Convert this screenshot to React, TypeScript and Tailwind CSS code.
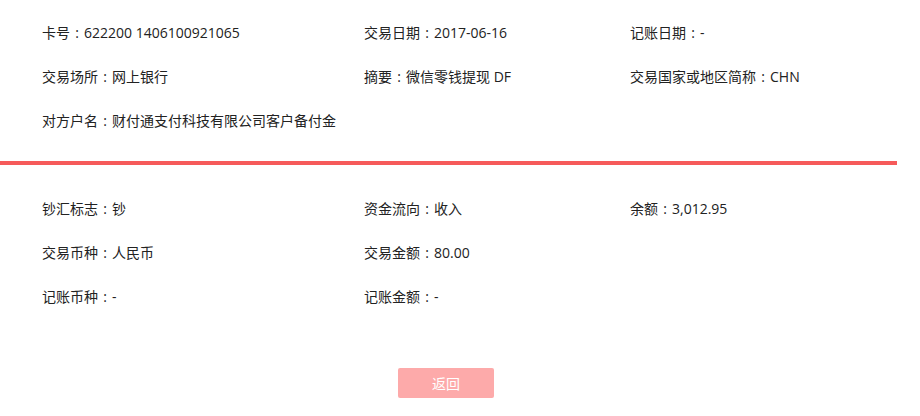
const top = [
  ["卡号", "622200 1406100921065"],
  ["交易日期", "2017-06-16"],
  ["记账日期", "-"],
  ["交易场所", "网上银行"],
  ["摘要", "微信零钱提现 DF"],
  ["交易国家或地区简称", "CHN"],
  ["对方户名", "财付通支付科技有限公司客户备付金"],
];

const bottom = [
  ["钞汇标志", "钞"],
  ["资金流向", "收入"],
  ["余额", "3,012.95"],
  ["交易币种", "人民币"],
  ["交易金额", "80.00"],
  ["", ""],
  ["记账币种", "-"],
  ["记账金额", "-"],
];

function Grid({ items }: { items: string[][] }) {
  return (
    <div className="grid grid-cols-[322px_266px_1fr] px-[42px]">
      {items.map(([label, value], i) => (
        <div key={i} className="flex h-[44px] items-center whitespace-nowrap">
          {label && (
            <>
              {label}
              <span className="inline-block w-[14px] text-center">:</span>
              {value}
            </>
          )}
        </div>
      ))}
    </div>
  );
}

export default function App() {
  return (
    <div
      className="w-[897px] bg-white text-[14px] text-[#222]"
      style={{ fontFamily: '"Open Sans", "Noto Sans CJK SC", sans-serif' }}
    >
      <div className="pt-[10px] pb-[19px]">
        <Grid items={top} />
      </div>
      <div className="h-[4px] bg-[#f65a5a]" />
      <div className="pt-[21px]">
        <Grid items={bottom} />
      </div>
      <div className="flex justify-center pt-[50px] pr-[5px]">
        <button className="h-[30px] w-[96px] rounded-[2px] bg-[#fdaaaa] text-[14px] text-white">
          返回
        </button>
      </div>
    </div>
  );
}
